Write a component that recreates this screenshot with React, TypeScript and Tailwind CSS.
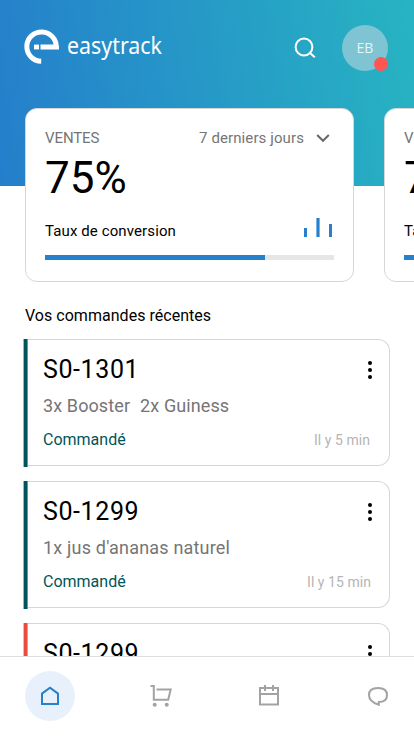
import React from "react";

function Logo() {
  return (
    <div className="flex items-center">
      <svg width="36" height="36" viewBox="0 0 36 36" fill="none">
        <path d="M17.2 32.3A14.7 14.7 0 1 1 32.2 18.3" stroke="#fff" strokeWidth="5" />
        <path d="M16.5 15.6H30.2L35 17V20.4H16.5Z" fill="#fff" />
        <rect x="10" y="15.6" width="5" height="4.8" fill="#fff" />
      </svg>
      <span className="ml-[6.5px] -mt-[5px] origin-left scale-x-[0.93] font-['Noto_Sans',sans-serif] text-[23px] leading-[30px] text-white">
        easytrack
      </span>
    </div>
  );
}

function Header() {
  return (
    <header className="flex h-[186px] items-start bg-[linear-gradient(80deg,#257ecb_0%,#269ac7_52%,#27b4c2_100%)] pl-[24px] pr-[26px] pt-[25px]">
      <div className="pt-[4px]">
        <Logo />
      </div>
      <svg className="ml-auto mt-[12px] mr-[26px]" width="22" height="22" viewBox="0 0 22 22" fill="none" stroke="#fff" strokeWidth="2">
        <circle cx="10" cy="10" r="8.4" />
        <path d="M15.7 15.7L20.8 20.3" />
      </svg>
      <div className="relative flex size-[46px] items-center justify-center rounded-full bg-[#7fc4d2] font-['Open_Sans',sans-serif] text-[14px] text-[#e6f4f7]">
        <span className="-mt-[1px]">EB</span>
        <span className="absolute right-0 bottom-0 size-[14px] rounded-full bg-[#ff5652]" />
      </div>
    </header>
  );
}

function SalesCard() {
  return (
    <section className="h-[174px] w-[329px] shrink-0 rounded-[12px] border border-[#d6d6d6] bg-white pr-[19px] pl-[19px] pt-[20px]">
      <div className="flex h-[18px] items-center text-[15px] leading-[18px] text-[#757575]">
        <span className="tracking-[-0.1px]">VENTES</span>
        <span className="ml-auto tracking-[0.1px]">7 derniers jours</span>
        <svg className="ml-[12px] mr-[4px]" width="14" height="10" viewBox="0 0 14 10" fill="none" stroke="#686868" strokeWidth="2">
          <path d="M1.2 2L7 7.8L12.8 2" />
        </svg>
      </div>
      <div className="mt-[5px] h-[52px] text-[44px] leading-[52px] text-black">75%</div>
      <div className="mt-[13px] flex h-[20px] items-end justify-between">
        <span className="-mb-[3px] text-[15px] leading-[18px] tracking-[0.11px] text-black">Taux de conversion</span>
        <svg className="mr-[2px]" width="28" height="19" viewBox="0 0 28 19" fill="#2680cb">
          <path d="M0 10h3v9H0zM12.4 0h3.2v19h-3.2zM25 6h3v13h-3z" />
        </svg>
      </div>
      <div className="mt-[18px] h-[5px] bg-[#e6e6e6]">
        <div className="h-full w-[219.5px] bg-[#2680cb]" />
      </div>
    </section>
  );
}

type Order = { code: string; items: string[]; time: string; late?: boolean };

const orders: Order[] = [
  { code: "S0-1301", items: ["3x Booster", "2x Guiness"], time: "Il y 5 min" },
  { code: "S0-1299", items: ["1x jus d'ananas naturel"], time: "Il y 15 min" },
  { code: "S0-1299", items: ["1x jus d'ananas naturel"], time: "Il y 15 min", late: true },
];

function OrderCard({ order }: { order: Order }) {
  return (
    <article className="flex h-[128px]">
      <div className={`w-[4px] shrink-0 -translate-x-[0.4px] ${order.late ? "bg-[#ea4d3d]" : "bg-[#00545a]"}`} />
      <div className="h-[127px] flex-1 rounded-r-[12px] border border-l-0 border-[#d6d6d6] pl-[15px] pr-[18px] pt-[15px]">
        <div className="flex h-[30px] items-center justify-between">
          <span className="text-[25px] leading-[30px] tracking-[0.6px] text-black">{order.code}</span>
          <svg className="-mr-[1px]" width="4" height="18" viewBox="0 0 4 18">
            <circle cx="2" cy="2" r="2" />
            <circle cx="2" cy="9" r="2" />
            <circle cx="2" cy="16" r="2" />
          </svg>
        </div>
        <div className="mt-[10px] flex h-[22px] gap-[10px] text-[18px] leading-[22px] tracking-[0.1px] text-[#757575]">
          {order.items.map((item) => (
            <span key={item} className={order.items.length === 1 ? "tracking-[0.19px]" : ""}>
              {item}
            </span>
          ))}
        </div>
        <div className="mt-[13px] flex h-[20px] items-baseline justify-between leading-[20px]">
          <span className="text-[16px] text-[#00545a]">Commandé</span>
          <span className={`text-[14px] tracking-[0.05px] text-[#b5b5b5] ${order.items.length === 1 ? "" : "mr-[1px]"}`}>
            {order.time}
          </span>
        </div>
      </div>
    </article>
  );
}

function TabBar() {
  return (
    <nav className="flex h-[80px] shrink-0 items-start border-t border-[#dedede] bg-white pt-[14px] pl-[25px]">
      <div className="flex size-[50px] items-center justify-center rounded-full bg-[#e8f1fb]">
        <svg width="20" height="20" viewBox="0 0 20 20" fill="none" stroke="#2680cb" strokeWidth="2">
          <path d="M2 18V7.6L10 1.7L18 7.6V18Z" />
        </svg>
      </div>
      <svg className="mt-[14px] ml-[75px]" width="22" height="22" viewBox="0 0 22 22" fill="none" stroke="#a3a3a3" strokeWidth="2">
        <path d="M0.5 1H3.8V14.7H18.2L20.7 4.4H6.5" />
        <circle cx="4.7" cy="19.7" r="2" fill="#a3a3a3" stroke="none" />
        <circle cx="16.7" cy="19.7" r="2" fill="#a3a3a3" stroke="none" />
      </svg>
      <svg className="mt-[14px] ml-[87px]" width="20" height="22" viewBox="0 0 20 22" fill="none" stroke="#a3a3a3" strokeWidth="2">
        <path d="M1 3H19V19.5H1ZM1 9H19M6 0V6M14 0V6" />
      </svg>
      <svg className="mt-[14px] ml-[88px]" width="22" height="22" viewBox="0 0 22 22" fill="none" stroke="#a3a3a3" strokeWidth="2">
        <path d="M11.8 19.7V17C17.4 17 20 14 20 10C20 5.8 16.8 3 11 3C5.2 3 2 5.8 2 10C2 14.8 6 18 11.8 19.7Z" />
      </svg>
    </nav>
  );
}

export default function App() {
  return (
    <div className="flex h-[736px] w-[414px] flex-col overflow-hidden bg-white font-[Roboto,sans-serif]">
      <main className="min-h-0 flex-1 overflow-hidden">
        <Header />
        <div className="relative -mt-[78px] flex gap-[30px] overflow-hidden pl-[25px]">
          <SalesCard />
          <SalesCard />
        </div>
        <h2 className="mt-[24px] ml-[25px] text-[16px] leading-[20px] tracking-[0.03px] text-black">Vos commandes récentes</h2>
        <div className="mt-[13px] flex flex-col gap-[14px] pl-[24px] pr-[24px]">
          {orders.map((order, i) => (
            <OrderCard key={i} order={order} />
          ))}
        </div>
      </main>
      <TabBar />
    </div>
  );
}
